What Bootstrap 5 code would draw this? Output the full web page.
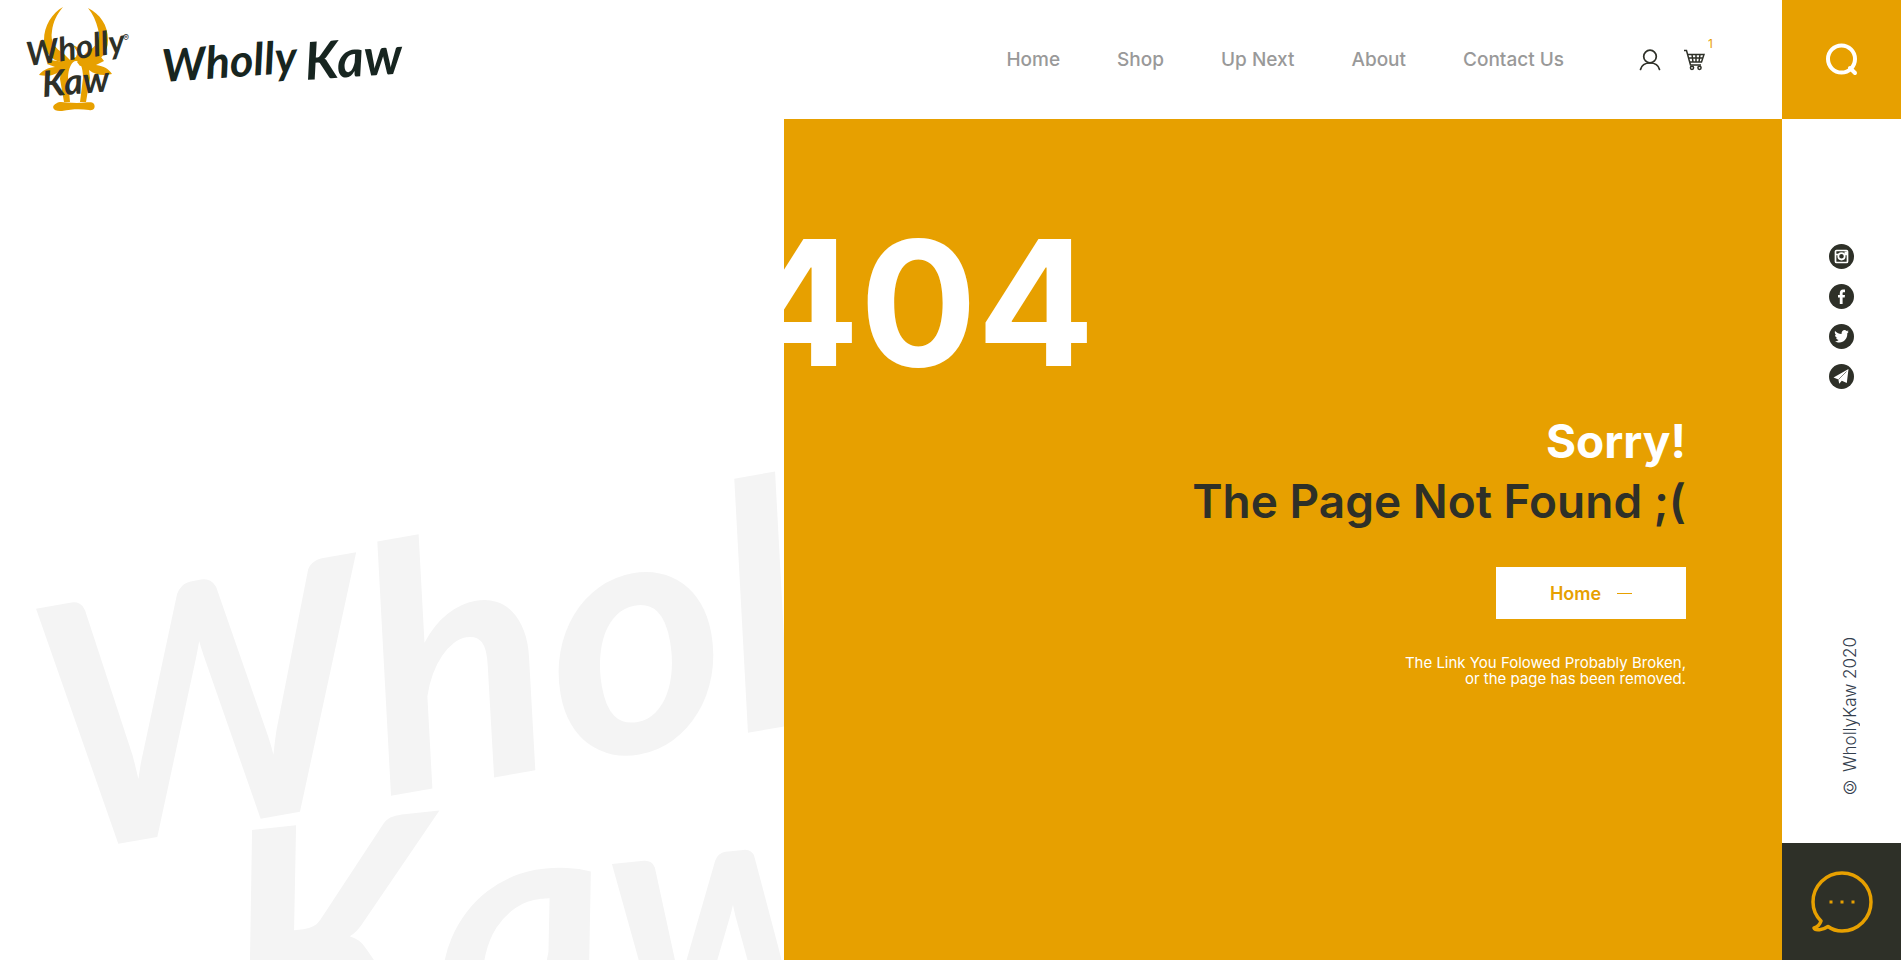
<!DOCTYPE html>
<html lang="en">
<head>
<meta charset="utf-8">
<meta name="viewport" content="width=device-width, initial-scale=1">
<title>Wholly Kaw – Page Not Found</title>
<link href="https://cdn.jsdelivr.net/npm/bootstrap@5.3.0/dist/css/bootstrap.min.css" rel="stylesheet">
<style>
  :root { --gold: #e7a000; --ink: #2e3028; --rail: 119px; }
  body { font-family: Inter, "Noto Sans", sans-serif; color: var(--ink); background: #fff; }
  .brush { font-family: Lato, "Open Sans", sans-serif; font-style: italic; font-weight: 700; }
  .topbar { height: var(--rail); padding-right: 77px; }
  .main-nav { gap: 57px; }
  .main-nav a { color: #999; font-size: 19px; font-weight: 500; line-height: 24px; }
  .tools { gap: 22px; margin-left: 75px; }
  .tools a { color: var(--ink); }
  .tools svg, .socials svg, .side-rail svg { display: block; }
  .cart-count { top: -12px; right: -8px; font-size: 12px; line-height: 14px; color: var(--gold); }
  .art-pane { width: 44%; }
  .art-pane svg { width: 100%; height: 100%; }
  .error-pane { background: var(--gold); padding: 94px 96px 60px 0; min-width: 0; }
  .error-code { font-size: 174px; line-height: 180px; font-weight: 700; margin: 0 0 18px -42px; }
  .error-title { font-size: 46px; line-height: 60px; font-weight: 700; }
  .error-title span { color: var(--ink); font-weight: 600; }
  .home-btn { width: 190px; height: 52px; gap: 16px; margin: 36px 0; color: var(--gold); background: #fff; border: 0; font-size: 18px; font-weight: 600; }
  .home-btn i { width: 15px; height: 1px; background: var(--gold); }
  .error-note { font-size: 15px; line-height: 16px; }
  .side-rail { width: var(--rail); }
  .search-btn, .chat-btn { width: 100%; border: 0; padding: 0; }
  .search-btn { height: var(--rail); background: var(--gold); }
  .chat-btn { height: 117px; background: var(--ink); }
  .socials { gap: 15px; padding: 125px 0 40px; }
  .copyright { writing-mode: vertical-rl; rotate: 180deg; font: 300 17px/24px Inter, "Noto Sans", sans-serif; color: #34404e; margin: 0 0 46px 16px; }
</style>
</head>
<body>
<div class="d-flex min-vh-100">
  <div class="d-flex flex-column flex-grow-1">
    <header class="topbar d-flex align-items-center">
      <a href="#" aria-label="Wholly Kaw" class="me-auto">
        <svg class="d-block" width="420" height="119" viewBox="0 0 420 119">
          <g fill="#e7a000">
            <path d="M63 7C52 13 44 26 44 40c0 12 7 20 17 22l9 3 2-3-8-8c-9-6-14-12-12-23 1-9 5-17 11-24Z"/>
            <path d="M88 8c12 6 20 17 20 32 0 13-8 21-18 24l-10 2-3-4 9-9c11-7 15-14 12-24-2-8-5-15-10-21Z"/>
            <path d="m73 45 6 3-3 9-11 5-15-2-3 4 8 3c-9 1-13 4-16 8 9 2 17 0 22-5l-1 9 4 23h6l-2-23c0-11 4-18 8-18s7 6 7 17l-3 24h6l4-24-1-8c6 5 14 6 23 4-3-5-8-8-16-9l8-4-3-4-17 2-8-9Z"/>
            <path d="M57 103c3-2 9 0 20 0s14-2 17 1c2 4-1 7-5 6-8-1-17-1-27 1-9 1-12-5-5-8Z"/>
          </g>
          <g class="brush" fill="#2e3028">
            <text x="28" y="66" font-size="33" transform="rotate(-8 28 66)">Wholly</text>
            <text x="43" y="97" font-size="36" transform="rotate(-5 43 97)">Kaw</text>
          </g>
          <g class="brush" fill="#172520">
            <text x="163" y="82" font-size="45" transform="rotate(-4 163 82)">Wholly</text>
            <text x="306" y="80" font-size="52" transform="rotate(-4 306 80)">Kaw</text>
          </g>
          <text x="123" y="41" font-size="9" fill="#2e3028">®</text>
        </svg>
      </a>
      <nav class="main-nav d-flex" aria-label="Main">
        <a class="text-decoration-none" href="#">Home</a>
        <a class="text-decoration-none" href="#">Shop</a>
        <a class="text-decoration-none" href="#">Up Next</a>
        <a class="text-decoration-none" href="#">About</a>
        <a class="text-decoration-none" href="#">Contact Us</a>
      </nav>
      <div class="tools d-flex align-items-center">
        <a href="#" aria-label="Account">
          <svg width="22" height="22" viewBox="0 0 22 22" fill="none" stroke="currentColor" stroke-width="1.7" stroke-linecap="round"><circle cx="11" cy="7.500" r="6.300"/><path d="M1.500 20.500C2.500 16.500 5.500 14 11 14s8.500 2.500 9.500 6.500"/></svg>
        </a>
        <a href="#" aria-label="Cart, 1 item" class="position-relative">
          <svg width="22" height="22" viewBox="0 0 22 22" fill="none" stroke="currentColor" stroke-width="1.500"><path d="M1 1.500h2.500L7.500 16H18M4.500 5.500H21L18.500 13H6.500M5.500 9h14.500M9 5.500l1 7.500M13 5.500V13M17 5.500L16 13"/><circle cx="9" cy="18.800" r="1.600"/><circle cx="16.500" cy="18.800" r="1.600"/></svg>
          <span class="cart-count position-absolute">1</span>
        </a>
      </div>
    </header>
    <main class="d-flex flex-grow-1">
      <div class="art-pane position-relative overflow-hidden" aria-hidden="true">
        <svg class="position-absolute top-0 start-0" viewBox="0 0 784 841" preserveAspectRatio="xMinYMin slice">
          <g class="brush" fill="#f4f4f4">
            <text x="60" y="735" font-size="340" transform="rotate(-10 60 735)">Wholly</text>
            <text x="235" y="960" font-size="340" transform="rotate(-6 235 960)">Kaw</text>
          </g>
        </svg>
      </div>
      <section class="error-pane position-relative flex-grow-1 text-end text-white">
        <div class="error-code text-start">404</div>
        <h1 class="error-title mb-0">Sorry!<br><span>The Page Not Found ;(</span></h1>
        <button type="button" class="home-btn d-inline-flex align-items-center justify-content-center">Home <i></i></button>
        <p class="error-note mb-0">The Link You Folowed Probably Broken,<br>or the page has been removed.</p>
      </section>
    </main>
  </div>
  <aside class="side-rail d-flex flex-column align-items-center flex-shrink-0">
    <button type="button" class="search-btn d-flex align-items-center justify-content-center" aria-label="Search">
      <svg width="34" height="34" viewBox="0 0 34 34" fill="none" stroke="#fff" stroke-width="4" stroke-linecap="round"><circle cx="16.500" cy="16" r="13.500"/><path d="m25 25 5 5"/></svg>
    </button>
    <div class="socials d-flex flex-column">
      <a href="#" aria-label="Instagram"><svg width="25" height="25" viewBox="0 0 25 25"><circle cx="12.500" cy="12.500" r="12.500" fill="#2e3028"/><rect x="6.500" y="6.500" width="12" height="12" rx="1" fill="none" stroke="#fff" stroke-width="1.700"/><path d="M6.500 10.500h3m6 0h3" stroke="#fff" stroke-width="1.500"/><path fill="#fff" d="M15.500 7.500H18V10h-2.500Z"/><circle cx="12.500" cy="12.300" r="3.200" fill="none" stroke="#fff" stroke-width="1.800"/></svg></a>
      <a href="#" aria-label="Facebook"><svg width="25" height="25" viewBox="0 0 25 25"><circle cx="12.500" cy="12.500" r="12.500" fill="#2e3028"/><path fill="#fff" d="M10.800 20v-6.500H9V11h1.800V9.300C10.800 7 12 5.500 14 5.500h2v2.700h-1.200c-1 0-1.200.4-1.200 1.300V11H16l-.300 2.500h-2.100V20Z"/></svg></a>
      <a href="#" aria-label="Twitter"><svg width="25" height="25" viewBox="0 0 25 25"><circle cx="12.500" cy="12.500" r="12.500" fill="#2e3028"/><path fill="#fff" d="M6 7c2 2 4 3 6.500 3 0-3.500 3-5 5.200-3l1.800-.6-1 1.600 1.300-.3-1.500 1.600C18.500 14.500 15 18.500 10.500 18.500c-1.800 0-3.300-.5-4.500-1.300 1.600 0 2.800-.3 3.700-1.200-1.300-.2-2.200-.9-2.600-2h1.200C7 13.300 6 12.300 6 10.900l1.200.3C6 10 5.500 8.500 6 7Z"/></svg></a>
      <a href="#" aria-label="Telegram"><svg width="25" height="25" viewBox="0 0 25 25"><circle cx="12.500" cy="12.500" r="12.500" fill="#2e3028"/><path fill="#fff" d="m4.500 13.500 15-8.500-1.700 14-5-2.300-2.600 3-.8-4.200Z"/><path d="m9.500 15.500 8-8" fill="none" stroke="#2e3028" stroke-width=".6"/></svg></a>
    </div>
    <p class="copyright mt-auto">© WhollyKaw 2020</p>
    <button type="button" class="chat-btn d-flex align-items-center justify-content-center" aria-label="Open chat">
      <svg width="62" height="62" viewBox="0 0 62 62" fill="none" stroke="#e7a000" stroke-width="3.500" stroke-linejoin="round"><path d="M17 55.500c4 3 9 4.500 14 4.500 16 0 29-13 29-29S47 2 31 2 2 15 2 31c0 7 3 14 8 19-1 3-3 6-7 7 1 3 9 2 14-1.500Z"/><path stroke="none" fill="#e7a000" d="M18.500 29.500h3v3h-3zm11 0h3v3h-3zm11 0h3v3h-3z"/></svg>
    </button>
  </aside>
</div>
<script src="https://cdn.jsdelivr.net/npm/bootstrap@5.3.0/dist/js/bootstrap.bundle.min.js"></script>
</body>
</html>
